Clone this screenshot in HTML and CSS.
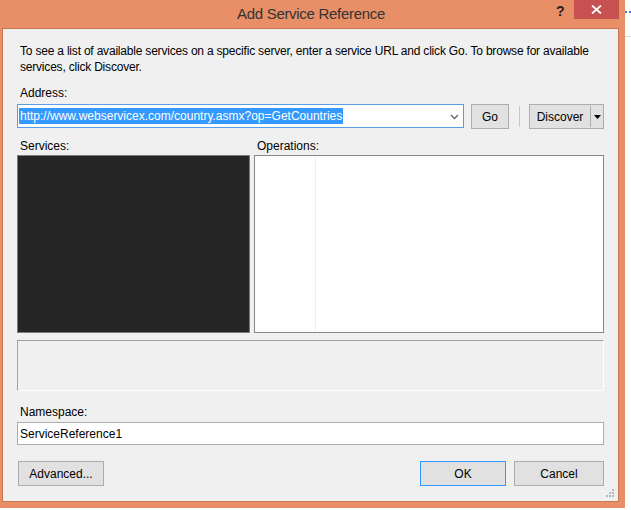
FILE: index.html
```html
<!DOCTYPE html>
<html>
<head>
<meta charset="utf-8">
<link rel="stylesheet" href="styles.css">
</head>
<body>
<div class="screen">
  <div class="window">
    <div class="titlebar">
      <div class="title">Add Service Reference</div>
      <div class="help">?</div>
      <div class="close">
        <svg width="11" height="9" viewBox="0 0 11 9"><path d="M1 0.5 L10 8.5 M10 0.5 L1 8.5" stroke="#fff" stroke-width="1.8"/></svg>
      </div>
    </div>
    <div class="client">
      <p class="intro">To see a list of available services on a specific server, enter a service URL and click Go. To browse for available services, click Discover.</p>
      <div class="label">Address:</div>
      <div class="addr-row">
        <div class="combo">
          <span class="sel">http://www.webservicex.com/country.asmx?op=GetCountries</span>
          <svg class="chev" width="9" height="6" viewBox="0 0 9 6"><path d="M1 1 L4.5 4.5 L8 1" fill="none" stroke="#666" stroke-width="1.4"/></svg>
        </div>
        <div class="btn go">Go</div>
        <div class="sep"></div>
        <div class="split">
          <span class="split-main">Discover</span>
          <span class="split-arrow"><svg width="7" height="4" viewBox="0 0 7 4"><path d="M0 0 H7 L3.5 4 Z" fill="#000"/></svg></span>
        </div>
      </div>
      <div class="lists">
        <div class="col services">
          <div class="label">Services:</div>
          <div class="box dark"></div>
        </div>
        <div class="col ops">
          <div class="label">Operations:</div>
          <div class="box white"><div class="ops-line"></div></div>
        </div>
      </div>
      <div class="desc"></div>
      <div class="label ns-label">Namespace:</div>
      <div class="textbox">ServiceReference1</div>
      <div class="footer">
        <div class="btn adv">Advanced...</div>
        <div class="spacer"></div>
        <div class="btn ok">OK</div>
        <div class="btn cancel">Cancel</div>
      </div>
      <svg class="grip" width="8" height="8" viewBox="0 0 8 8" fill="#b8b8b8">
        <rect x="6" y="0" width="2" height="2"/>
        <rect x="3" y="3" width="2" height="2"/><rect x="6" y="3" width="2" height="2"/>
        <rect x="0" y="6" width="2" height="2"/><rect x="3" y="6" width="2" height="2"/><rect x="6" y="6" width="2" height="2"/>
      </svg>
    </div>
  </div>
  <div class="strip"></div>
</div>
</body>
</html>
```
FILE: styles.css
```css
* { box-sizing: border-box; }
html, body { margin: 0; padding: 0; background: #fff; }
body { font-family: "Liberation Sans", Arial, sans-serif; font-size: 12px; color: #000; }
.screen { display: flex; width: 631px; height: 510px; }
.window {
  width: 625px; height: 508px;
  background: #E98F67;
  display: flex; flex-direction: column;
}
.strip { flex: 1; background: #fff; border-top: 2px dotted #4a7fd6; margin-top: 11px; height: 26px; border-bottom: 1px solid #ddd; }
.titlebar { height: 28px; display: flex; align-items: flex-start; }
.title {
  flex: 1; text-align: center; font-size: 15px; color: #333; letter-spacing: -0.3px;
  padding-top: 5px; padding-left: 66px;
}
.help { width: 14px; margin-top: 3px; font-weight: bold; font-size: 14px; color: #222; margin-right: 4px; }
.close {
  width: 45px; height: 19px; background: #C75050; margin-right: 6px;
  display: flex; align-items: center; justify-content: center;
}
.client {
  position: relative;
  margin-left: 2px; width: 617px; height: 474px;
  border: 1px solid #C8774F;
  background: #F0F0F0;
  padding: 14px 14px 0 14px;
}
.intro { margin: 0; padding-left: 3px; line-height: 16px; letter-spacing: -0.2px; }
.label { line-height: 16px; padding-left: 3px; }
.intro + .label { margin-top: 10px; }
.addr-row { display: flex; align-items: flex-start; margin-top: 3px; height: 25px; }
.combo {
  width: 447px; height: 24px; background: #fff; border: 1px solid #569DE5;
  display: flex; align-items: center; padding-left: 1px; position: relative;
}
.sel { background: #3399FF; color: #fff; line-height: 16px; padding: 0 1px; }
.chev { position: absolute; right: 4px; top: 9px; }
.btn {
  height: 25px; background: #E1E1E1; border: 1px solid #ADADAD;
  display: flex; align-items: center; justify-content: center;
}
.go { width: 38px; margin-left: 7px; }
.sep { width: 1px; height: 21px; background: #C8C8C8; margin: 2px 9px 0 10px; }
.split {
  width: 75px; height: 25px; background: #E1E1E1; border: 1px solid #ADADAD;
  display: flex;
}
.split-main { width: 61px; display: flex; align-items: center; justify-content: center; border-right: 1px solid #ADADAD; margin: 1px 0; }
.split-arrow { flex: 1; display: flex; align-items: center; justify-content: center; }
.lists { display: flex; gap: 4px; margin-top: 9px; }
.col { display: flex; flex-direction: column; }
.services { width: 233px; }
.ops { flex: 1; }
.box { height: 178px; margin-top: 1px; border: 1px solid #828790; }
.dark { background: #252525; border-color: #7A7A7A; }
.white { background: #fff; position: relative; }
.ops-line { width: 1px; height: 100%; margin-left: 60px; background: #E6EEF7; }
.desc {
  height: 51px; margin-top: 7px;
  border: 1px solid #A0A0A0; border-right-color: #fff; border-bottom-color: #fff;
}
.ns-label { margin-top: 13px; }
.textbox {
  height: 23px; margin-top: 2px; background: #fff; border: 1px solid #ABADB3;
  display: flex; align-items: center; padding-left: 2px;
}
.footer { display: flex; margin-top: 16px; padding-left: 1px; }
.spacer { flex: 1; }
.adv { width: 86px; }
.ok { width: 86px; border-color: #3399FF; }
.cancel { width: 90px; margin-left: 8px; }
.grip { position: absolute; right: 4px; bottom: 4px; }
```
